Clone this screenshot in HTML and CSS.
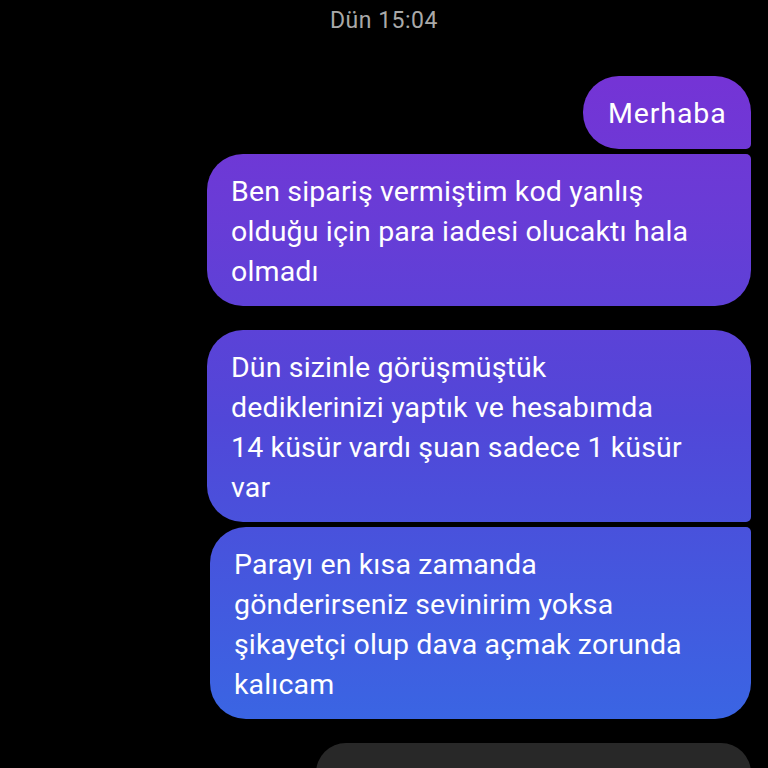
FILE: index.html
```html
<!DOCTYPE html>
<html lang="tr">
<head>
<meta charset="utf-8">
<link rel="stylesheet" href="styles.css">
</head>
<body>
<div class="chat">
  <div class="stamp">Dün 15:04</div>
  <div class="msg out first short">Merhaba</div>
  <div class="msg out wide mid-end">Ben sipariş vermiştim kod yanlış<br>olduğu için para iadesi olucaktı hala<br>olmadı</div>
  <div class="msg out wide first gap">Dün sizinle görüşmüştük<br>dediklerinizi yaptık ve hesabımda<br>14 küsür vardı şuan sadece 1 küsür<br>var</div>
  <div class="msg out wide2 mid-end">Parayı en kısa zamanda<br>gönderirseniz sevinirim yoksa<br>şikayetçi olup dava açmak zorunda<br>kalıcam</div>
  <div class="msg in gap"></div>
</div>
</body>
</html>
```

FILE: styles.css
```css
html, body {
  margin: 0;
  padding: 0;
  background: #000;
  height: 768px;
  overflow: hidden;
}
.chat {
  display: flex;
  flex-direction: column;
  align-items: flex-end;
  padding: 0 17px 0 0;
  font-family: Roboto, "Noto Sans", sans-serif;
}
.stamp {
  align-self: stretch;
  text-align: center;
  color: #a9a9a9;
  font-size: 23px;
  letter-spacing: 0.5px;
  line-height: 24px;
  padding: 9px 0 0 17px;
  height: 71px;
  box-sizing: border-box;
}
.msg {
  box-sizing: border-box;
  color: #fff;
  font-size: 28.5px;
  letter-spacing: 0.15px;
  line-height: 40px;
  padding: 18px 24px 14px 24px;
  border-radius: 36px;
  margin-top: 5px;
}
.msg.out {
  background: linear-gradient(to bottom, #7b2fd5 0px, #6a3bd6 200px, #5147d8 420px, #3a65e3 720px, #3470e6 768px);
  background-attachment: fixed;
}
.msg.short {
  width: 168px;
  padding: 18px 0 15px 25px;
  letter-spacing: 0.9px;
}
.msg.first {
  border-bottom-right-radius: 5px;
}
.msg.mid-end {
  border-top-right-radius: 5px;
}
.msg.wide {
  width: 544px;
}
.msg.wide2 {
  width: 541px;
}
.msg.gap {
  margin-top: 24px;
}
.msg.in {
  background: #282828;
  width: 435px;
  height: 60px;
}
```
